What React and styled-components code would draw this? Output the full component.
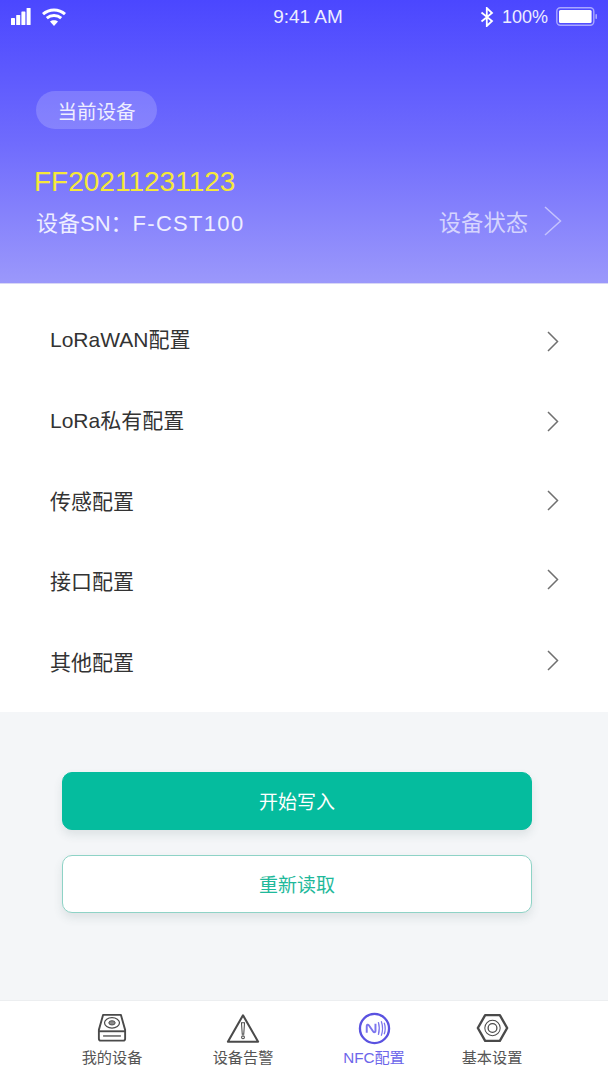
import styled, { createGlobalStyle } from "styled-components";

const FONT = `"Liberation Sans", "Noto Sans CJK SC", sans-serif`;

const menuItems = [
  { label: "LoRaWAN配置", shift: 3 },
  { label: "LoRa私有配置", shift: 2 },
  { label: "传感配置", shift: 1 },
  { label: "接口配置", shift: -1 },
  { label: "其他配置", shift: -1 },
];

export default function App() {
  return (
    <Page>
      <GlobalStyle />
      <Header>
        <StatusBar>
          <StatusSide>
            <SignalIcon />
            <WifiIcon />
          </StatusSide>
          <Clock>9:41 AM</Clock>
          <StatusSide $right>
            <BluetoothIcon />
            <Percent>100%</Percent>
            <BatteryIcon />
          </StatusSide>
        </StatusBar>
        <Badge>当前设备</Badge>
        <DeviceName>FF20211231123</DeviceName>
        <DeviceRow>
          <DeviceSn>
            设备SN：<SnValue>F-CST100</SnValue>
          </DeviceSn>
          <StatusLink>
            设备状态
            <Chevron width={18} height={30} color="#c4c2fd" />
          </StatusLink>
        </DeviceRow>
      </Header>

      <Menu>
        {menuItems.map((item) => (
          <MenuRow key={item.label}>
            <MenuLabel>{item.label}</MenuLabel>
            <MenuArrow $shift={item.shift}>
              <Chevron width={12} height={21} color="#707070" />
            </MenuArrow>
          </MenuRow>
        ))}
      </Menu>

      <Actions>
        <ActionButton $filled>开始写入</ActionButton>
        <ActionButton>重新读取</ActionButton>
      </Actions>

      <TabBar>
        <Tab>
          <TabIcon><DiskIcon /></TabIcon>
          <TabLabel>我的设备</TabLabel>
        </Tab>
        <Tab>
          <TabIcon><AlertIcon /></TabIcon>
          <TabLabel>设备告警</TabLabel>
        </Tab>
        <Tab>
          <TabIcon><NfcIcon /></TabIcon>
          <TabLabel $active>NFC配置</TabLabel>
        </Tab>
        <Tab>
          <TabIcon><NutIcon /></TabIcon>
          <TabLabel>基本设置</TabLabel>
        </Tab>
      </TabBar>
    </Page>
  );
}

function Chevron({ width, height, color }) {
  return (
    <svg width={width} height={height} viewBox={`0 0 ${width} ${height}`} fill="none" stroke={color} strokeWidth="1.5">
      <path d={`M1 1L${width - 1.5} ${height / 2}L1 ${height - 1}`} />
    </svg>
  );
}

function SignalIcon() {
  return (
    <svg width="20" height="18" viewBox="0 0 20 18" fill="#fff">
      <rect x="0" y="10" width="4" height="7" rx="0.6" />
      <rect x="5.2" y="7" width="4" height="10" rx="0.6" />
      <rect x="10.4" y="3.5" width="4" height="13.5" rx="0.6" />
      <rect x="15.6" y="0" width="4" height="17" rx="0.6" />
    </svg>
  );
}

function WifiIcon() {
  return (
    <svg width="24" height="18" viewBox="0 0 24 18" fill="none" stroke="#fff" strokeWidth="3">
      <path d="M1 6.2C7.2 0.6 16.8 0.6 23 6.2" />
      <path d="M4.8 10.2C8.9 6.6 15.1 6.6 19.2 10.2" />
      <path d="M12 18l-4-4.6C10 11.8 14 11.8 16 13.4z" fill="#fff" stroke="none" />
    </svg>
  );
}

function BluetoothIcon() {
  return (
    <svg width="14" height="20" viewBox="0 0 14 20" fill="none" stroke="#fff" strokeWidth="1.8">
      <path d="M1.5 5.5L12 14l-5.2 5V1L12 6 1.5 14.5" />
    </svg>
  );
}

function BatteryIcon() {
  return (
    <svg width="42" height="20" viewBox="0 0 42 20">
      <rect x="0.8" y="0.8" width="37" height="17.4" rx="3.5" fill="none" stroke="#a9a7ff" strokeWidth="1.4" />
      <rect x="3" y="3" width="32.6" height="13" rx="1.5" fill="#fff" />
      <rect x="39.4" y="7" width="1.6" height="5" rx="0.8" fill="#a9a7ff" />
    </svg>
  );
}

function DiskIcon() {
  return (
    <svg width="30" height="30" viewBox="0 0 32 32" fill="none" stroke="#4a4a4a" strokeWidth="2">
      <path d="M6.5 2h19L30 18v9.5a2 2 0 0 1-2 2H4a2 2 0 0 1-2-2V18z" strokeLinejoin="round" />
      <path d="M2 19.5h28" />
      <ellipse cx="16" cy="10.5" rx="8" ry="5.6" strokeWidth="1.3" />
      <ellipse cx="16" cy="10.5" rx="3.4" ry="2.3" fill="#8a8a8a" strokeWidth="1" />
      <path d="M6.5 24.5h19" strokeWidth="1.4" />
    </svg>
  );
}

function AlertIcon() {
  return (
    <svg width="34" height="31" viewBox="0 0 36 32" fill="none" stroke="#4a4a4a">
      <path d="M18 2L34 30H2z" strokeWidth="2.2" strokeLinejoin="round" />
      <path d="M16.4 10h3.2l-.8 12h-1.6z" strokeWidth="1.1" />
      <circle cx="18" cy="25.3" r="1.5" strokeWidth="1.1" />
    </svg>
  );
}

function NfcIcon() {
  return (
    <svg width="33" height="33" viewBox="0 0 34 34" fill="none" stroke="#5a52e0">
      <circle cx="17" cy="17" r="15" strokeWidth="2.4" />
      <path d="M9 21.5v-7c0-1.6 1.4-1.8 2.2-.8l4.6 6.6c.8 1 2.2.6 2.2-.8V12" stroke="#7b74ee" strokeWidth="2" />
      <path d="M21 10.5c1.2 4 1.2 9 0 13M24 9.5c1.6 4.6 1.6 10.4 0 15M27 11c1.2 3.6 1.2 8.4 0 12" stroke="#7b74ee" strokeWidth="1.3" />
    </svg>
  );
}

function NutIcon() {
  return (
    <svg width="33" height="30" viewBox="0 0 36 32" fill="none" stroke="#4a4a4a">
      <path d="M10 2h16l8 14-8 14H10L2 16z" strokeWidth="2.6" strokeLinejoin="round" />
      <circle cx="18" cy="16" r="8.4" strokeWidth="1.1" />
      <circle cx="18" cy="16" r="4.8" strokeWidth="1.4" />
    </svg>
  );
}

const GlobalStyle = createGlobalStyle`
  html, body {
    margin: 0;
    padding: 0;
    background: #f4f6f8;
  }
  * {
    box-sizing: border-box;
  }
`;

const Page = styled.div`
  width: 608px;
  height: 1080px;
  display: flex;
  flex-direction: column;
  overflow: hidden;
  font-family: ${FONT};
  background: #f4f6f8;
`;

const Header = styled.header`
  height: 284px;
  flex: none;
  padding: 0 46px 0 36px;
  display: flex;
  flex-direction: column;
  align-items: flex-start;
  background: linear-gradient(180deg, #4b47ff 0%, #6f6bfd 50%, #9b98fb 100%);
  border-bottom: 1px solid #d8d7f5;
`;

const StatusBar = styled.div`
  width: 608px;
  margin-left: -36px;
  margin-right: -46px;
  height: 34px;
  padding: 0 10px 0 11px;
  display: flex;
  align-items: center;
  justify-content: space-between;
  color: #fff;
`;

const StatusSide = styled.div`
  width: 130px;
  display: flex;
  align-items: center;
  justify-content: ${(p) => (p.$right ? "flex-end" : "flex-start")};
  gap: ${(p) => (p.$right ? "8px" : "11px")};
`;

const Clock = styled.span`
  font-size: 19px;
  margin-left: 7px;
  opacity: 0.9;
`;

const Percent = styled.span`
  font-size: 18px;
  opacity: 0.9;
`;

const Badge = styled.div`
  margin-top: 57px;
  width: 121px;
  height: 38px;
  border-radius: 19px;
  background: rgba(255, 255, 255, 0.18);
  color: #eeeeff;
  font-size: 19.5px;
  display: flex;
  align-items: center;
  justify-content: center;
`;

const DeviceName = styled.div`
  margin-top: 36px;
  margin-left: -2px;
  height: 34px;
  line-height: 34px;
  font-size: 28px;
  color: #f5e83a;
`;

const DeviceRow = styled.div`
  width: 100%;
  margin-top: 5px;
  display: flex;
  align-items: center;
  justify-content: space-between;
`;

const DeviceSn = styled.div`
  font-size: 22px;
  color: #eeeeff;
  margin-top: 1px;
`;

const SnValue = styled.span`
  letter-spacing: 1.3px;
`;

const StatusLink = styled.div`
  display: flex;
  align-items: center;
  gap: 16px;
  font-size: 22.3px;
  color: #d5d4fe;
`;

const Menu = styled.section`
  height: 428px;
  flex: none;
  padding-top: 14px;
  background: #fff;
`;

const MenuRow = styled.div`
  height: 80.7px;
  padding: 0 49px 0 50px;
  display: flex;
  align-items: center;
  justify-content: space-between;
`;

const MenuLabel = styled.span`
  font-size: 21px;
  color: #333;
`;

const MenuArrow = styled.span`
  display: flex;
  transform: translateY(${(p) => p.$shift}px);
`;

const Actions = styled.section`
  flex: 1;
  padding: 60px 76px 0 62px;
  display: flex;
  flex-direction: column;
  gap: 25px;
`;

const ActionButton = styled.div`
  height: 58px;
  padding-bottom: 2px;
  border-radius: 10px;
  display: flex;
  align-items: center;
  justify-content: center;
  font-size: 19px;
  color: ${(p) => (p.$filled ? "#fff" : "#1fb99b")};
  background: ${(p) => (p.$filled ? "#05bc9e" : "#fff")};
  border: ${(p) => (p.$filled ? "1px solid #05bc9e" : "1.5px solid #8ed3c6")};
  box-shadow: 0 5px 10px rgba(60, 90, 90, 0.12);
`;

const TabBar = styled.nav`
  height: 80px;
  flex: none;
  padding: 10px 0 0 46.5px;
  background: #fff;
  border-top: 1px solid #eceef0;
  display: grid;
  grid-template-columns: 131px 131px 131px 105px;
  align-content: start;
`;

const Tab = styled.div`
  display: flex;
  flex-direction: column;
  align-items: center;
  gap: 3px;
`;

const TabIcon = styled.div`
  height: 34px;
  display: flex;
  align-items: center;
  justify-content: center;
`;

const TabLabel = styled.span`
  font-size: 15.2px;
  line-height: 20px;
  color: ${(p) => (p.$active ? "#6d66ea" : "#555")};
`;
